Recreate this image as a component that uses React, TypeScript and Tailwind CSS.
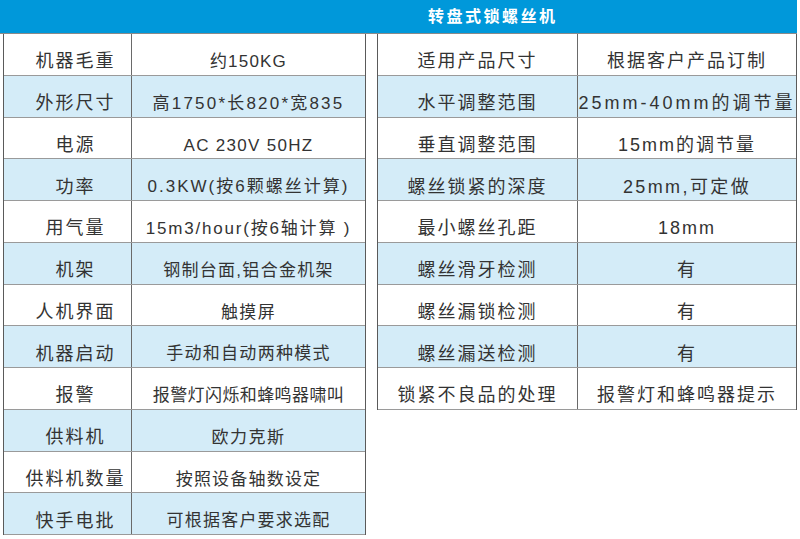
import React from "react";

type Cell = [string, string, string?];

const left: Cell[] = [
  ["机器毛重", "约150KG", "tracking-[1.2px]"],
  ["外形尺寸", "高1750*长820*宽835", "tracking-[2.2px]"],
  ["电源", "AC 230V 50HZ", "tracking-[1.3px]"],
  ["功率", "0.3KW(按6颗螺丝计算)", "tracking-[2px]"],
  ["用气量", "15m3/hour(按6轴计算 )", "tracking-[1.8px]"],
  ["机架", "钢制台面,铝合金机架", "tracking-[1.3px]"],
  ["人机界面", "触摸屏", "tracking-[1.3px]"],
  ["机器启动", "手动和自动两种模式", "tracking-[1.3px]"],
  ["报警", "报警灯闪烁和蜂鸣器啸叫", "tracking-[0.4px]"],
  ["供料机", "欧力克斯", "tracking-[1.5px]"],
  ["供料机数量", "按照设备轴数设定", "tracking-[1.2px]"],
  ["快手电批", "可根据客户要求选配", "tracking-[1.2px]"],
];

const right: Cell[] = [
  ["适用产品尺寸", "根据客户产品订制", "tracking-[2px]"],
  ["水平调整范围", "25mm-40mm的调节量", "tracking-[3px]"],
  ["垂直调整范围", "15mm的调节量", "tracking-[2px]"],
  ["螺丝锁紧的深度", "25mm,可定做", "tracking-[2.4px]"],
  ["最小螺丝孔距", "18mm", "tracking-[2px]"],
  ["螺丝滑牙检测", "有", "tracking-[2px]"],
  ["螺丝漏锁检测", "有", "tracking-[2px]"],
  ["螺丝漏送检测", "有", "tracking-[2px]"],
  ["锁紧不良品的处理", "报警灯和蜂鸣器提示", "tracking-[2px]"],
];

const font = {
  fontFamily: '"Liberation Sans", "Noto Sans CJK SC", sans-serif',
};

function Row({
  cell,
  blue,
  labelW,
  labelPad,
  valueSize,
}: {
  cell: Cell;
  blue: boolean;
  labelW: string;
  labelPad: string;
  valueSize: string;
}) {
  const [a, b, tr] = cell;
  return (
    <div
      className={`flex h-[41.75px] border-b border-[#9a9a9a] ${
        blue ? "bg-[#d4ecf8]" : "bg-white"
      }`}
    >
      <div
        className={`${labelW} ${labelPad} shrink-0 flex items-center justify-center pt-[15px] border-r border-[#6a6a6a] text-[18px] tracking-[2px] text-[#333] whitespace-nowrap`}
      >
        {a}
      </div>
      <div
        className={`flex-1 flex items-center justify-center pt-[15px] ${valueSize} ${tr ?? ""} text-[#333] whitespace-nowrap`}
      >
        {b}
      </div>
    </div>
  );
}

export default function App() {
  return (
    <div className="w-[800px] h-[539px] bg-white overflow-hidden" style={font}>
      <div className="w-[797px] h-[34px] bg-[#0098da] border-b border-[#8a8a8a] flex items-center">
        <div className="ml-[428px] text-white font-bold text-[16px] tracking-[2.5px] whitespace-nowrap">
          转盘式锁螺丝机
        </div>
      </div>
      <div className="flex items-start">
        <div className="ml-[3px] w-[363px] border-l border-r border-[#5a5a5a]">
          {left.map((c, i) => (
            <Row
              key={i}
              cell={c}
              blue={i % 2 === 1}
              labelW="w-[128px]"
              labelPad="pl-[16px]"
              valueSize="text-[17px]"
            />
          ))}
        </div>
        <div className="ml-[11px] w-[420px] border-l border-r border-[#5a5a5a]">
          {right.map((c, i) => (
            <Row
              key={i}
              cell={c}
              blue={i % 2 === 1}
              labelW="w-[200px]"
              labelPad="pl-0"
              valueSize="text-[18px]"
            />
          ))}
        </div>
      </div>
    </div>
  );
}
